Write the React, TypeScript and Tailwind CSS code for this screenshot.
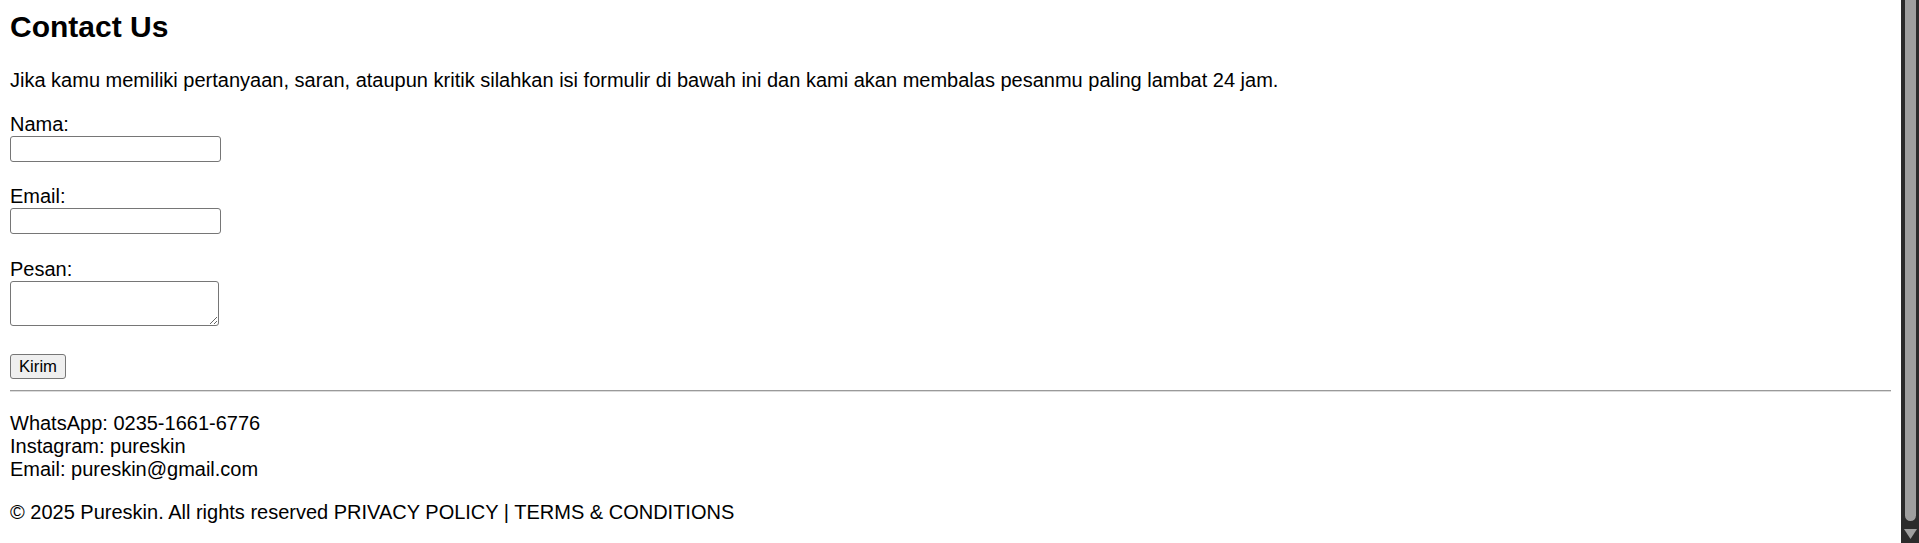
export default function App() {
    return (
        <div className="flex h-[543px] overflow-hidden bg-white font-['Liberation_Sans',Arial,sans-serif] text-black">
            {/* Isi halaman */}
            <div className="flex-1 px-[10px] pt-[9px] text-[20px] leading-[23px]">
                <h2 className="text-[30px] font-bold leading-[35px]">Contact Us</h2>
                <p className="mt-[25px]">
                    Jika kamu memiliki pertanyaan, saran, ataupun kritik silahkan isi formulir di bawah ini dan kami akan membalas pesanmu paling lambat 24 jam.
                </p>

                <form className="flex flex-col items-start" onSubmit={(e) => e.preventDefault()}>
                    <label htmlFor="nama" className="mt-[21px] block">Nama:</label>
                    <input
                        id="nama"
                        type="text"
                        className="h-[26px] w-[211px] rounded-[3px] border border-[#767676] bg-white px-[2px] text-[16px] outline-none"
                    />

                    <label htmlFor="email" className="mt-[23px] block">Email:</label>
                    <input
                        id="email"
                        type="email"
                        className="h-[26px] w-[211px] rounded-[3px] border border-[#767676] bg-white px-[2px] text-[16px] outline-none"
                    />

                    <label htmlFor="pesan" className="mt-[24px] block">Pesan:</label>
                    <textarea
                        id="pesan"
                        className="h-[45px] w-[209px] rounded-[3px] border border-[#767676] bg-white px-[2px] text-[16px] outline-none"
                    />

                    <button
                        type="submit"
                        className="mt-[28px] h-[25px] w-[56px] rounded-[3px] border border-[#767676] bg-[#efefef] text-[16.7px] leading-[20px] text-black"
                    >
                        Kirim
                    </button>
                </form>

                <hr className="mt-[11px] h-[2px] border-t border-b border-t-[#9a9a9a] border-b-[#dcdcdc]" />

                <p className="mt-[20px]">
                    WhatsApp: 0235-1661-6776
                    <br />
                    Instagram: pureskin
                    <br />
                    Email: pureskin@gmail.com
                </p>

                <p className="mt-[20px]">
                    © 2025 Pureskin. All rights reserved PRIVACY POLICY | TERMS &amp; CONDITIONS
                </p>
            </div>

            {/* Scrollbar gelap */}
            <div className="flex w-[18px] shrink-0 flex-col items-center bg-[#2b2b2b]">
                <div className="ml-[1px] h-[521px] w-[11px] rounded-b-[6px] bg-[#9f9f9f]" />
                <svg className="mt-[8px]" width="13" height="10" viewBox="0 0 13 10">
                    <path d="M0 0 H13 L6.5 10 Z" fill="#9f9f9f" />
                </svg>
            </div>
        </div>
    );
}
